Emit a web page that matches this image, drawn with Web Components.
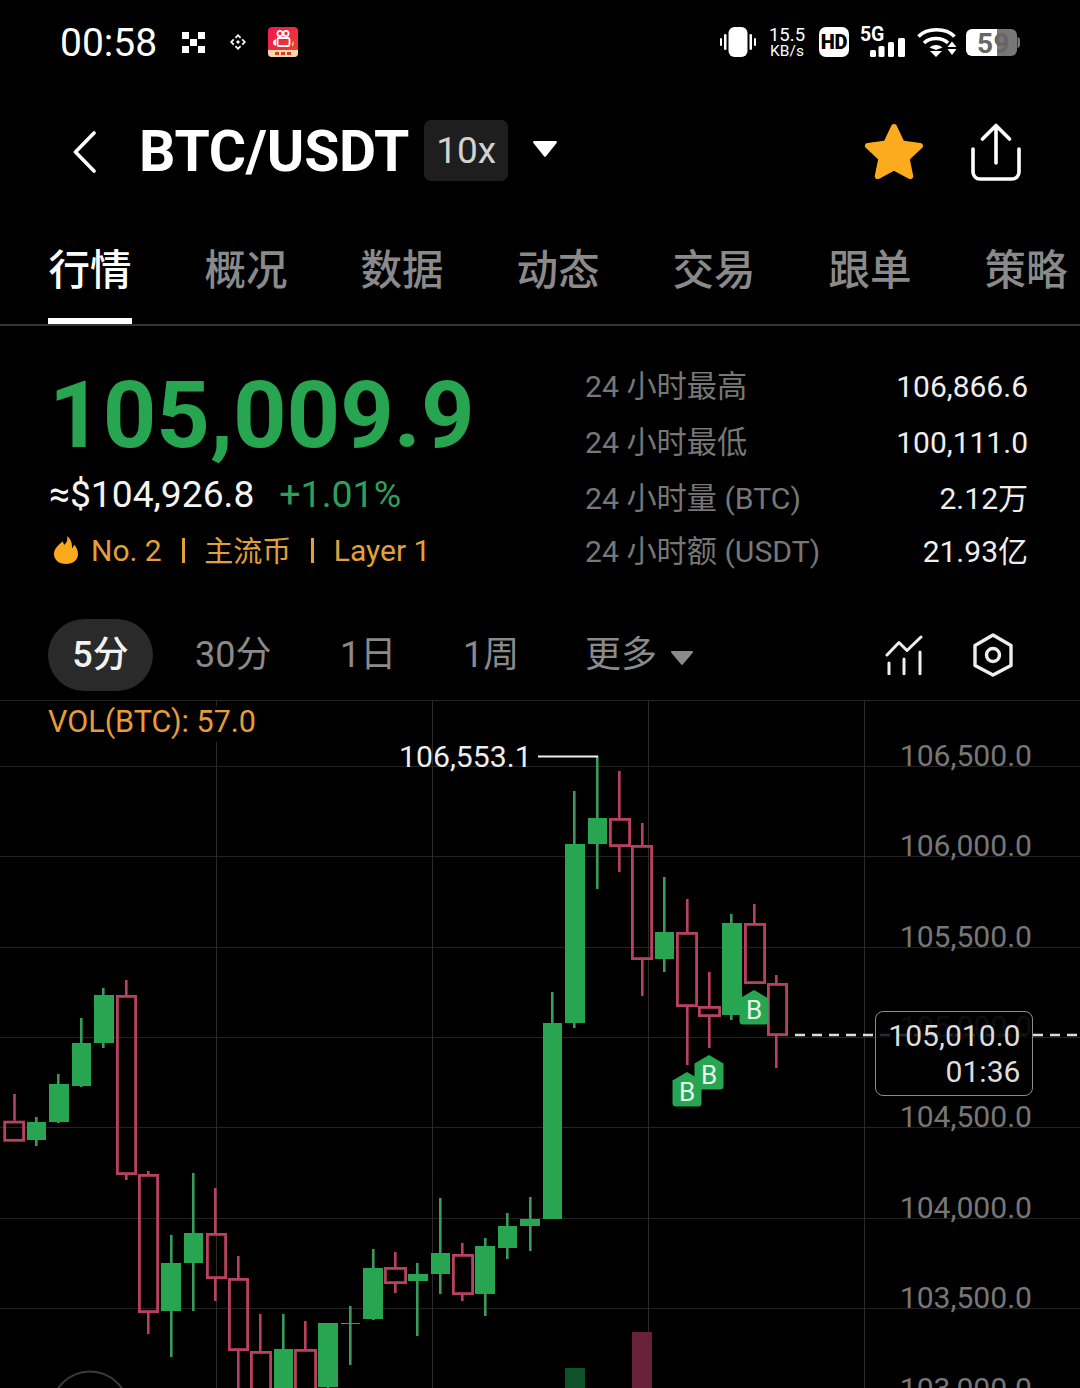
<!DOCTYPE html>
<html lang="zh">
<head>
<meta charset="utf-8">
<title>BTC/USDT</title>
<style>
  html,body{margin:0;padding:0;background:#000;}
  body{width:1080px;height:1388px;overflow:hidden;font-family:Roboto,"Noto Sans CJK SC",sans-serif;color:#fff;display:flex;flex-direction:column;}
</style>
</head>
<body>
<status-bar></status-bar>
<nav-header></nav-header>
<tab-bar>
  <tab-item active>行情</tab-item>
  <tab-item>概况</tab-item>
  <tab-item>数据</tab-item>
  <tab-item>动态</tab-item>
  <tab-item>交易</tab-item>
  <tab-item>跟单</tab-item>
  <tab-item>策略</tab-item>
</tab-bar>
<price-panel>
  <stat-row slot="stats" label="24 小时最高" value="106,866.6"></stat-row>
  <stat-row slot="stats" label="24 小时最低" value="100,111.0"></stat-row>
  <stat-row slot="stats" label="24 小时量 (BTC)" value="2.12万"></stat-row>
  <stat-row slot="stats" label="24 小时额 (USDT)" value="21.93亿" style="margin-top:-3px"></stat-row>
</price-panel>
<period-bar></period-bar>
<kline-chart></kline-chart>

<script>
const FONT = 'Roboto,"Noto Sans CJK SC",sans-serif';

class StatusBar extends HTMLElement {
  constructor(){super();this.attachShadow({mode:'open'}).innerHTML=`
  <style>
    :host{display:flex;height:84px;align-items:center;justify-content:space-between;padding:0 60px 0 61px;box-sizing:border-box;font-family:${FONT};color:#fff;flex:none}
    .l,.r{display:flex;align-items:center}
    .time{font-size:39px;line-height:44px;width:96px;margin-top:2px;margin-left:-1px;margin-right:1px;white-space:nowrap}
    svg{display:block}
    .speed{width:36px;margin-left:13px;text-align:center;line-height:1;display:flex;flex-direction:column;align-items:center}
    .speed b{font-weight:400;font-size:18.5px;line-height:18px}
    .speed i{font-style:normal;font-size:15.5px;line-height:15px}
    .hd{width:30px;height:30px;background:#fff;border-radius:7px;margin-left:14px;color:#000;font-weight:900;font-size:20px;line-height:30px;text-align:center;letter-spacing:-.3px}
    .sig{position:relative;width:44px;height:30px;margin-left:12px}
    .sig span{position:absolute;left:-1px;top:-2px;font-size:19.5px;line-height:20px;font-weight:700;letter-spacing:-.2px}
    .sig svg{position:absolute;left:0;top:0}
    .bat{position:relative;width:54px;height:28px;margin-left:9px;margin-top:2px}
    .bat svg{position:absolute;left:0;top:0}
    .bat span{position:absolute;left:11px;top:1px;font-size:28px;line-height:28px;font-weight:700;color:#666;letter-spacing:.5px}
  </style>
  <div class="l">
    <span class="time">00:58</span>
    <svg style="margin-left:25px" width="23" height="21" viewBox="0 0 23 21" fill="#fff"><rect x="0" y="0" width="7" height="7"/><rect x="16" y="0" width="7" height="7"/><rect x="8" y="7" width="7" height="7"/><rect x="0" y="14" width="7" height="7"/><rect x="16" y="14" width="7" height="7"/></svg>
    <svg style="margin-left:25px" width="16" height="16" viewBox="0 0 16 16" fill="#fff"><path d="M8 0l3.2 3.2-1.2 1.2L8 2.4 6 4.4 4.8 3.2zM3.2 4.8l1.2 1.2L2.4 8l2 2-1.2 1.2L0 8zM12.8 4.8L16 8l-3.2 3.2-1.2-1.2 2-2-2-2zM8 6l2 2-2 2-2-2zM4.8 12.8L6 11.6l2 2 2-2 1.2 1.2L8 16z"/></svg>
    <svg style="margin-left:22px" width="30" height="30" viewBox="0 0 30 30">
      <defs><linearGradient id="g" x1="0" y1="0" x2="1" y2="1"><stop offset="0" stop-color="#f01652"/><stop offset="1" stop-color="#e9452a"/></linearGradient></defs>
      <rect width="30" height="30" rx="4" fill="url(#g)"/>
      <path d="M0 23h30v3a4 4 0 0 1-4 4H4a4 4 0 0 1-4-4z" fill="#f8d9a8"/>
      <g fill="none" stroke="#fff" stroke-width="1.8"><circle cx="12" cy="6.5" r="2.6"/><circle cx="18" cy="6.5" r="2.6"/><rect x="9.5" y="11" width="12" height="8" rx="1.5"/></g>
      <path d="M8 12l-3 2v3l3 2z" fill="#fff"/><path d="M24 16l1.5-2 .5 3-2 3z" fill="#ffb74a"/>
      <path d="M7 25h4v3H7zM13 25h4v3h-4zM19 25h4v3h-4z" fill="#d53a2a"/>
    </svg>
  </div>
  <div class="r">
    <svg width="36" height="30" viewBox="0 0 36 30" fill="#fff"><rect x="8.500" width="19" height="30" rx="6"/><rect x="0" y="11" width="2" height="8" rx="1"/><rect x="4" y="7" width="2.500" height="16" rx="1.200"/><rect x="29.500" y="7" width="2.500" height="16" rx="1.200"/><rect x="34" y="11" width="2" height="8" rx="1"/></svg>
    <div class="speed"><b>15.5</b><i>KB/s</i></div>
    <div class="hd">HD</div>
    <div class="sig"><span>5G</span>
      <svg width="44" height="30" viewBox="0 0 44 30" fill="#fff"><rect x="9" y="23" width="6" height="7" rx="1.500"/><rect x="17.500" y="19" width="6" height="11" rx="1.500"/><rect x="27" y="15" width="6" height="15" rx="1.500"/><rect x="37" y="11" width="7" height="19" rx="1.500"/></svg>
    </div>
    <svg style="margin-left:12px" width="40" height="30" viewBox="0 0 40 30">
      <g fill="none" stroke="#fff" stroke-width="3.600"><path d="M1.500 9.500C10 .5 29 .5 37.500 9.500"/><path d="M7 16C13 10 25 10 31 16"/></g>
      <path d="M12.500 20.500c4-3.300 9-3.300 13 0l-6.500 2.500z" fill="#fff"/><path d="M13 24h12l-6 6z" fill="#fff"/>
      <path d="M35 14.500l4.500 5.500h-9zM30.500 22h9L35 28z" fill="#fff"/>
    </svg>
    <div class="bat">
      <svg width="54" height="28" viewBox="0 0 54 28"><rect x="24" y="0" width="27" height="27" rx="6" fill="#777"/><path d="M6 0h25v27H6a6 6 0 0 1-6-6V6a6 6 0 0 1 6-6z" fill="#fff"/><path d="M51.500 8c1.500 0 2.500 1.500 2.500 3v5c0 1.500-1 3-2.500 3z" fill="#777"/></svg>
      <span>59</span>
    </div>
  </div>`;}
}
customElements.define('status-bar',StatusBar);

class NavHeader extends HTMLElement {
  constructor(){super();this.attachShadow({mode:'open'}).innerHTML=`
  <style>
    :host{display:flex;height:136px;align-items:center;box-sizing:border-box;padding:0 59px 0 73px;font-family:${FONT};color:#fff;flex:none}
    svg{display:block;flex:none}
    .sym{font-size:57px;font-weight:700;margin-left:43px;line-height:60px;letter-spacing:-.2px;white-space:nowrap}
    .chip{margin-left:15px;width:84px;height:61px;background:#1e1e1e;border-radius:7px;font-size:37px;line-height:61px;text-align:center;color:#d2d2d2;margin-top:-3px}
    .sp{flex:1}
  </style>
  <svg width="23" height="42" viewBox="0 0 23 42"><path d="M21 2L2.500 21 21 40" fill="none" stroke="#fff" stroke-width="3.600" stroke-linecap="round" stroke-linejoin="round"/></svg>
  <span class="sym">BTC/USDT</span>
  <span class="chip">10x</span>
  <svg style="margin:-6px 0 0 25px" width="24" height="16" viewBox="0 0 24 16"><path d="M1.500 0h21c1.200 0 1.800 1.200 1.100 2.100L13 15.300c-.5.700-1.500.7-2 0L.4 2.100C-.3 1.200.3 0 1.500 0z" fill="#fff"/></svg>
  <span class="sp"></span>
  <svg style="margin-top:-3px" width="60" height="56" viewBox="0 0 60 56"><path d="M30 4l7.800 16.600 18.200 2.300-13.400 12.400 3.600 17.900L30 44.300l-16.200 8.900 3.600-17.900L4 22.900l18.200-2.300z" fill="#fdab1e" stroke="#fdab1e" stroke-width="6" stroke-linejoin="round"/></svg>
  <svg style="margin-left:47px" width="50" height="58" viewBox="0 0 50 58"><g fill="none" stroke="#fff" stroke-width="3.600" stroke-linecap="round" stroke-linejoin="round"><path d="M2 26v23a7 7 0 0 0 7 7h32a7 7 0 0 0 7-7V26"/><path d="M25 40V2.500M11.500 16L25 2.500 38.500 16"/></g></svg>`;}
}
customElements.define('nav-header',NavHeader);

class TabBar extends HTMLElement {
  constructor(){super();this.attachShadow({mode:'open'}).innerHTML=`
  <style>
    :host{display:flex;height:106px;box-sizing:border-box;border-bottom:2px solid #333;padding-left:48px;gap:72px;overflow:hidden;flex:none;font-family:${FONT}}
  </style><slot></slot>`;}
}
customElements.define('tab-bar',TabBar);

class TabItem extends HTMLElement {
  constructor(){super();this.attachShadow({mode:'open'}).innerHTML=`
  <style>
    :host{display:block;position:relative;width:84px;height:104px;flex:none;text-align:center;font-size:41.5px;line-height:102px;color:#8a8a8a;white-space:nowrap;font-weight:500}
    :host([active]){color:#fff}
    :host([active])::after{content:"";position:absolute;left:0;right:0;bottom:0;height:6px;background:#fff}
  </style><slot></slot>`;}
}
customElements.define('tab-item',TabItem);

class StatRow extends HTMLElement {
  constructor(){super();const l=this.getAttribute('label'),v=this.getAttribute('value');this.attachShadow({mode:'open'}).innerHTML=`
  <style>
    :host{display:flex;justify-content:space-between;height:56px;line-height:56px;white-space:nowrap}
    .l{color:#777;font-size:30.2px}.v{color:#eee;font-size:30px}
  </style><span class="l">${l}</span><span class="v">${v}</span>`;}
}
customElements.define('stat-row',StatRow);

class PricePanel extends HTMLElement {
  constructor(){super();this.attachShadow({mode:'open'}).innerHTML=`
  <style>
    :host{display:flex;justify-content:space-between;height:293px;box-sizing:border-box;padding:33px 52px 0 50px;flex:none;font-family:${FONT}}
    .left{display:flex;flex-direction:column}
    .price{font-size:93.500px;font-weight:700;line-height:112px;color:#27a551;margin-left:-1px;white-space:nowrap;height:110px}
    .sub{display:flex;align-items:center;height:50px;gap:25px;white-space:nowrap;margin-left:-1px}
    .usd{font-size:37.200px;color:#f4f4f4}.chg{font-size:37.500px;color:#2f9e5a}
    .tags{display:flex;align-items:center;height:62px;margin-left:4px;color:#e2a03a;font-size:30px;white-space:nowrap}
    .tags i{display:block;width:3px;height:25px;background:#e2a03a;margin:0 19.500px 0 20px}
    .tags svg{margin-right:13px;display:block}
    .cn{margin-top:-3px;font-size:29px}
    .stats{width:443px;display:flex;flex-direction:column}
  </style>
  <div class="left">
    <div class="price">105,009.9</div>
    <div class="sub"><span class="usd">≈$104,926.8</span><span class="chg">+1.01%</span></div>
    <div class="tags">
      <svg width="24" height="28" viewBox="0 0 24 28"><path d="M13 0c1 4.500-.5 6.500-2.500 8.800C9.500 7.500 9 6.500 8.800 5.200 4 9 0 13 0 18c0 6 5 10 12 10s12-4 12-10c0-3.500-1.500-7-4-9.500-.2 1.600-.8 2.800-2 3.700C18.300 7.500 17 3 13 0z" fill="#fba91d"/></svg>
      <span>No. 2</span><i></i><span class="cn">主流币</span><i></i><span>Layer 1</span>
    </div>
  </div>
  <div class="stats"><slot name="stats"></slot></div>`;}
}
customElements.define('price-panel',PricePanel);

class PeriodBar extends HTMLElement {
  constructor(){super();this.attachShadow({mode:'open'}).innerHTML=`
  <style>
    :host{display:flex;height:81px;box-sizing:border-box;padding:0 67px 9px 48px;align-items:center;font-family:${FONT};font-size:36px;color:#8a8a8a;flex:none;white-space:nowrap}
    span{display:block;line-height:72px;height:72px}
    .on{width:105px;height:72px;border-radius:36px;background:#2a2a2a;color:#f2f2f2;text-align:center;line-height:72px;font-weight:500}
    svg{display:block}
  </style>
  <span class="on">5分</span>
  <span style="margin-left:42px;width:76px">30分</span>
  <span style="margin-left:69px;width:52px">1日</span>
  <span style="margin-left:71px;width:53px">1周</span>
  <span style="margin-left:69px;width:70px">更多</span>
  <svg style="margin:6px 0 0 16px" width="22" height="14" viewBox="0 0 22 14"><path d="M1 0h20c.9 0 1.300 1 .7 1.700L11.800 13.500c-.4.500-1.200.5-1.600 0L.3 1.700C-.3 1 .1 0 1 0z" fill="#8a8a8a"/></svg>
  <span style="flex:1"></span>
  <svg style="margin-left:-1px" width="38" height="40" viewBox="0 0 38 40" fill="none" stroke="#eee" stroke-width="3" stroke-linecap="round" stroke-linejoin="round"><path d="M2 20L14 7.500l8 8L36 2M4 28v11M19 24v15M35 17v22"/></svg>
  <svg style="margin-left:50px" width="40" height="44" viewBox="0 0 40 44" fill="none" stroke="#eee" stroke-width="3.400" stroke-linejoin="round"><path d="M20 2l18 10.500v20L20 42 2 32.500v-20z"/><circle cx="20" cy="22" r="6.500"/></svg>`;}
}
customElements.define('period-bar',PeriodBar);

const CANDLES=[
['r',3.3,25,1120.7,1141.7,14.5,1094,1121],
['g',27,46,1122,1140,36.3,1117,1146],
['g',49,69,1084,1122,58.3,1074,1123],
['g',72,91,1043,1086,81.3,1018,1087],
['g',94,114,995,1043,103.3,988,1048],
['r',116,137,995,1175,126.3,980,1180],
['r',138,159,1174,1313,148.3,1171,1334],
['g',161,181,1263,1311,171.3,1235,1357],
['g',184,203,1233,1263,193.3,1173,1311],
['r',206,227,1233,1279,215.3,1188,1301],
['r',228,249,1278,1351,238.3,1256,1400],
['r',250,272,1351,1400,260.3,1314,1400],
['g',274,293,1349,1400,283.3,1314,1400],
['r',294,317,1349,1400,305.3,1321,1400],
['g',318,338,1323,1387,328,1323,1389],
['d',341,360,1323,1323.8,350.3,1306,1365],
['g',363,383,1268,1319,373.3,1249,1320],
['r',384,407,1267,1284,395.3,1252,1293],
['g',408,428,1274,1281,417.3,1263,1336],
['g',431,450,1253,1274,440.3,1198,1294],
['r',452,474,1254,1295,462.3,1243,1301],
['g',475,495,1246,1294,485.3,1238,1316],
['g',498,517,1226,1248,507.3,1213,1259],
['g',520,540,1219,1226,530.3,1197,1251],
['g',543,562,1023,1219,552.3,992,1219],
['g',565,585,844,1023,574.3,791,1028],
['g',588,607,818,844,597.3,756,889],
['r',609,631,818,847,619.3,771,872],
['r',631,653,845,960,642.3,823,996],
['g',655,674,932,959,664.3,877,972],
['r',676,698,932,1007,687.3,899,1065],
['r',698,721,1006,1017,709.3,972,1048],
['g',722,742,923,1015,731.3,914,1020],
['r',744,766,923,984,754.3,904,984],
['r',767,788,983,1036,776.3,975,1068]
];

class KlineChart extends HTMLElement {
  constructor(){super();
    const G='#27a551',GW='#3a9a5c',R='#b8415f';
    let grid='';
    [766,856,947,1037,1127,1218,1308].forEach(y=>grid+=`<line x1="0" x2="1080" y1="${y+.5}" y2="${y+.5}" stroke="#232323"/>`);
    [216,432,648,864].forEach(x=>grid+=`<line x1="${x+.5}" x2="${x+.5}" y1="700" y2="1388" stroke="#2a2a2a"/>`);
    grid+=`<line x1="0" x2="1080" y1="700.5" y2="700.5" stroke="#262626"/>`;
    let c='';
    for(const [t,x0,x1,y0,y1,wx,wt,wb] of CANDLES){
      if(t==='r'){
        if(wt<y0)c+=`<rect x="${wx-1.3}" y="${wt}" width="2.600" height="${y0-wt}" fill="${R}"/>`;
        if(wb>y1)c+=`<rect x="${wx-1.3}" y="${y1}" width="2.600" height="${wb-y1}" fill="${R}"/>`;
        c+=`<rect x="${x0+1.4}" y="${y0+1.4}" width="${x1-x0-2.8}" height="${y1-y0-2.8}" fill="none" stroke="${R}" stroke-width="2.800"/>`;
      }else if(t==='d'){
        c+=`<rect x="${wx-1.3}" y="${wt}" width="2.600" height="${wb-wt}" fill="${GW}"/><rect x="${x0}" y="${y0}" width="${x1-x0}" height="1" fill="${GW}"/>`;
      }else{
        c+=`<rect x="${wx-1.3}" y="${wt}" width="2.600" height="${wb-wt}" fill="${GW}"/><rect x="${x0}" y="${y0}" width="${x1-x0}" height="${y1-y0}" fill="${G}"/>`;
      }
    }
    const axis=[[106500,756],[106000,846],[105500,937],[105000,1027,'#444'],[104500,1117],[104000,1208],[103500,1298],[103000,1389]]
      .map(([v,y,col])=>`<span class="ax" style="top:${y-700-20}px${col?';color:'+col:''}">${v.toLocaleString('en-US')}.0</span>`).join('');
    const badge=(x,y)=>`<path d="M${x+15} ${y}L${x+29.500} ${y+8.500}V${y+31}a3.500 3.500 0 0 1-3.500 3.500H${x+4}a3.500 3.500 0 0 1-3.500-3.500V${y+8.500}z" fill="#26a651"/>`;
    this.attachShadow({mode:'open'}).innerHTML=`
    <style>
      :host{display:block;position:relative;flex:1;min-height:0;height:688px;overflow:hidden;font-family:${FONT}}
      svg{position:absolute;left:0;top:0;display:block}
      .vol{position:absolute;left:48px;top:6px;height:36px;line-height:32px;background:#000;color:#e59c3a;font-size:30.500px;padding-right:4px;white-space:nowrap}
      .ax{position:absolute;right:48px;line-height:40px;font-size:30.100px;color:#777;white-space:nowrap}
      .hi{position:absolute;left:399px;top:37px;font-size:30.200px;line-height:40px;color:#eee;white-space:nowrap}
      .b{position:absolute;width:30px;text-align:center;font-size:26px;line-height:28px;color:#e8f6ec;font-weight:400}
      .box{position:absolute;left:875px;top:311px;width:158px;height:85px;box-sizing:border-box;border:1.500px solid #8b8b8b;border-radius:8px;background:rgba(0,0,0,.8);color:#ddd;font-size:30.100px;text-align:right;padding:6px 11.500px 0 0;line-height:36px}
    </style>
    <svg width="1080" height="688" viewBox="0 700 1080 688">
      ${grid}
      <rect x="565" y="1368" width="20" height="30" fill="#0f5129"/>
      <rect x="632" y="1332" width="20" height="66" fill="#67213a"/>
      <circle cx="90" cy="1410" r="38.500" fill="none" stroke="#3a3a3a" stroke-width="2"/>
      ${c}
      <path d="M538 756.500H598" stroke="#eee" stroke-width="2.200"/>
      <path d="M795 1035H1080" stroke="#ddd" stroke-width="2.500" stroke-dasharray="10 7"/>
      ${badge(672,1072)}${badge(694,1055)}${badge(739,990)}
    </svg>
    <span class="vol">VOL(BTC): 57.0</span>
    ${axis}
    <span class="hi">106,553.1</span>
    <span class="b" style="left:672px;top:378px">B</span>
    <span class="b" style="left:694px;top:361px">B</span>
    <span class="b" style="left:739px;top:296px">B</span>
    <div class="box">105,010.0<br>01:36</div>`;
  }
}
customElements.define('kline-chart',KlineChart);
</script>
</body>
</html>
